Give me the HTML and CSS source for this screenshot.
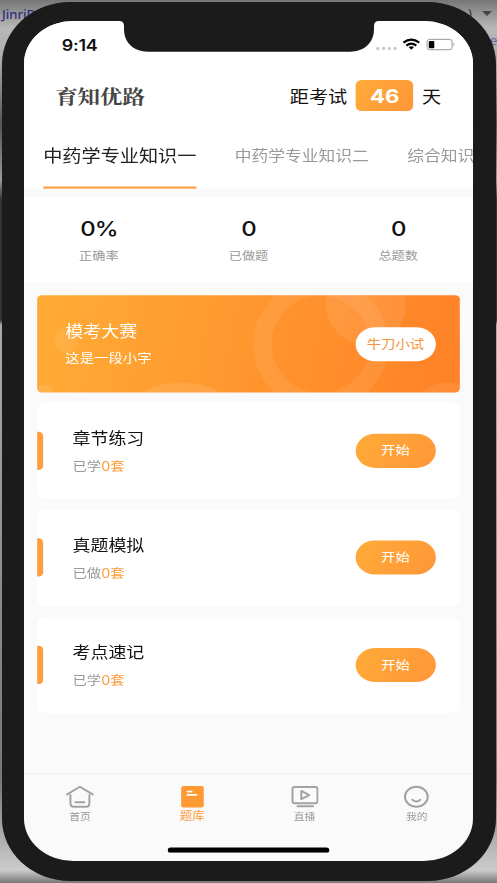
FILE: index.html
```
<!DOCTYPE html>
<html lang="zh-CN">
<head>
<meta charset="utf-8">
<title>题库</title>
<link rel="stylesheet" href="styles.css">
</head>
<body>
<div class="desktop">
  <div class="backdrop"><span class="word">JinriD</span><span class="paren">)</span><span class="caret"></span><span class="word-end">e</span></div>
  <div class="phone">
    <div class="screen-box">
      <div class="screen">
        <header class="status">
          <span class="time">9:14</span>
          <svg class="status-icons" viewBox="0 0 80 14" preserveAspectRatio="none">
            <g fill="#ccc"><circle cx="3" cy="11" r="1.700"/><circle cx="8.800" cy="11" r="1.700"/><circle cx="14.500" cy="11" r="1.700"/><circle cx="20.300" cy="11" r="1.700"/></g>
            <g fill="none" stroke="#000" stroke-width="2.200"><path d="M28.600 5Q36.500-1 44.400 5"/><path d="M31.500 8Q36.500 4.200 41.500 8"/></g>
            <path d="M33.800 9.500Q36.500 7.700 39.200 9.500L36.500 12.300Z"/>
            <rect x="52.300" y="1.800" width="25" height="10.400" rx="2.500" fill="none" stroke="#999"/>
            <rect x="54" y="3.400" width="5.500" height="7.400" rx="1"/>
            <path d="M78.600 5Q80.500 7 78.600 9Z" fill="#999"/>
          </svg>
        </header>
        <div class="brand-row">
          <h1>育知优路</h1>
          <div class="countdown"><span>距考试</span><b>46</b><span>天</span></div>
        </div>
        <nav class="subjects"><span class="active">中药学专业知识一</span><span>中药学专业知识二</span><span>综合知识</span></nav>
        <section class="stats">
          <div><strong>0%</strong><small>正确率</small></div>
          <div><strong>0</strong><small>已做题</small></div>
          <div><strong>0</strong><small>总题数</small></div>
        </section>
        <main>
          <section class="card banner">
            <svg class="bubbles" viewBox="0 0 422 96" preserveAspectRatio="none">
              <g fill="#fff">
                <ellipse cx="283" cy="49" rx="58" ry="57" fill="none" stroke="#fff" stroke-width="18" opacity=".08"/>
                <circle cx="328" cy="9" r="40" opacity=".09"/>
                <circle cx="29" cy="45" r="12" opacity=".08"/>
                <circle cx="7" cy="98" r="9" opacity=".1"/>
                <ellipse cx="144" cy="114" rx="50" ry="27" opacity=".1"/>
                <ellipse cx="412" cy="102" rx="28" ry="15" opacity=".08"/>
              </g>
            </svg>
            <div class="copy"><h2>模考大赛</h2><p>这是一段小字</p></div>
            <span class="button light">牛刀小试</span>
          </section>
          <section class="card"><i class="mark"></i><div class="copy"><h2>章节练习</h2><p>已学<em>0套</em></p></div><span class="button">开始</span></section>
          <section class="card"><i class="mark"></i><div class="copy"><h2>真题模拟</h2><p>已做<em>0套</em></p></div><span class="button">开始</span></section>
          <section class="card"><i class="mark"></i><div class="copy"><h2>考点速记</h2><p>已学<em>0套</em></p></div><span class="button">开始</span></section>
        </main>
        <footer class="tabs">
          <div>
            <svg viewBox="0 0 28 24" preserveAspectRatio="none"><path d="M1.200 10L14 2.300L26.800 10M4.500 10.500V19q0 3.200 3.200 3.200h12.600q3.200 0 3.200-3.200V10.500M9.500 17.700h9"/></svg>
            <span>首页</span>
          </div>
          <div class="current">
            <svg viewBox="0 0 28 24" preserveAspectRatio="none"><rect class="solid" x="2.700" y="1.500" width="22.600" height="21.500" rx="2.200"/><path class="lines" d="M8.900 7.100h4.300M8.900 10.400h9"/></svg>
            <span>题库</span>
          </div>
          <div>
            <svg viewBox="0 0 28 24" preserveAspectRatio="none"><rect x="1.500" y="2.500" width="25" height="16.200" rx="2"/><path d="M10.300 6.500V14.700L18.300 10.600ZM6.500 21.800h15.500"/></svg>
            <span>直播</span>
          </div>
          <div>
            <svg viewBox="0 0 28 24" preserveAspectRatio="none"><ellipse cx="14" cy="12.300" rx="11.400" ry="10"/><path d="M10 15.300q4 3.600 8 0"/></svg>
            <span>我的</span>
          </div>
        </footer>
        <div class="home-bar"></div>
      </div>
      <svg class="notch" viewBox="0 0 256 32"><path d="M-1 0H257Q253 .5 253 5V8C253 22 243 30.700 229 30.700H27C13 30.700 3 22 3 8V5Q3 .5-1 0Z"/></svg>
    </div>
  </div>
</div>
</body>
</html>
```
FILE: styles.css
```
* { box-sizing: border-box; }
body { margin: 0; font-family: Inter, "Noto Sans CJK SC", sans-serif; color: #111; }
h1, h2, p { margin: 0; font-weight: 400; }
em, i { font-style: normal; }

.desktop {
  position: relative;
  width: 497px;
  height: 883px;
  padding: 2px 1px 2px 2px;
  overflow: hidden;
  background: linear-gradient(#777 0, #b8b8b8 28px, #aaa 60px, #555 125px, #999 180px, #333 200px, #333 320px, #aaa 325px, #777 780px, #ccc 870px, #777 883px);
}
.backdrop { position: absolute; inset: 0; font: 13px/26px "Noto Sans", sans-serif; color: #303080; }
.backdrop span { position: absolute; }
.backdrop .word { left: 2px; top: 1px; font-weight: 500; }
.backdrop .paren { left: 468px; top: 0; color: #333; }
.backdrop .word-end { left: 490px; top: 27px; opacity: .6; }
.backdrop .caret { left: 482px; top: 11px; border: 5px solid transparent; border-top-color: #444; }

.phone {
  position: relative;
  height: 879px;
  padding: 19px 22px 20px;
  background: #1b1b1b;
  border-radius: 68px / 62px;
}
.screen-box { position: relative; width: 449px; height: 840px; }

/* 375 x 812 layout stretched to the device window */
.screen {
  display: flex;
  flex-direction: column;
  width: 375px;
  height: 812px;
  overflow: hidden;
  background: #fafafa;
  border-radius: 41px;
  transform: scale(1.1973, 1.0345);
  transform-origin: 0 0;
}
.notch { position: absolute; left: 97px; top: 0; width: 256px; height: 32px; overflow: visible; fill: #1b1b1b; }

.status { display: flex; justify-content: space-between; height: 44px; padding: 16px 15px 0 31.500px; background: #fff; }
.time { font-size: 15px; line-height: 15px; font-weight: 600; letter-spacing: -.2px; }
.status-icons { width: 66.800px; height: 13.500px; }

.brand-row { display: flex; align-items: center; justify-content: space-between; height: 57px; padding: 0 26.500px 1px 26px; background: #fff; }
.brand-row h1 { font: 700 18.800px/30px "Noto Serif CJK SC", "Noto Sans CJK SC", serif; color: #444; }
.countdown { display: flex; align-items: center; gap: 7px; font-size: 16px; }
.countdown b {
  width: 48.500px;
  height: 30px;
  border-radius: 5px;
  background: linear-gradient(120deg, #ffab38, #ff9638);
  color: #fff;
  font-size: 18.500px;
  line-height: 30px;
  text-align: center;
}

.subjects { display: flex; gap: 32px; height: 60.700px; padding-left: 16px; overflow: hidden; background: #fff; white-space: nowrap; color: #999; font-size: 14px; line-height: 57px; }
.subjects span { flex: none; }
.subjects .active { color: #222; font-size: 16px; border-bottom: 2.500px solid #ff9c3c; line-height: 58px; }

.stats { display: grid; grid-template-columns: repeat(3, 1fr); height: 83.500px; margin-top: 8px; padding-top: 19.500px; background: #fff; text-align: center; }
.stats strong, .stats small { display: block; }
.stats strong { font-size: 20px; line-height: 24px; font-weight: 500; letter-spacing: -.8px; }
.stats small { margin-top: 5.500px; color: #999; font-size: 11px; line-height: 16px; }

main { display: flex; flex-direction: column; gap: 10px; padding: 12.200px 11px 0; }
.card { position: relative; display: flex; align-items: center; height: 93.400px; padding-right: 20px; overflow: hidden; border-radius: 7px; background: #fff; }
.mark { width: 4.500px; height: 37px; border-radius: 0 4px 4px 0; background: #ff9c3c; }
.copy { flex: 1; padding-left: 25px; }
.copy h2 { font-size: 15px; line-height: 22px; }
.copy p { margin-top: 7px; color: #999; font-size: 12px; line-height: 18px; }
.card:not(.banner) .copy { padding-top: 2px; }
.copy em { color: #ff9c3c; }
.button { position: relative; width: 67.500px; height: 33px; border-radius: 17px; background: linear-gradient(120deg, #ffab38, #ff9638); color: #fff; font-size: 12px; line-height: 33px; text-align: center; }
.banner { border-radius: 4px; background: linear-gradient(100deg, #ffac36, #ff962e 50%, #ff8126); }
.banner .copy { position: relative; padding-left: 23.500px; }
.banner h2, .banner p { color: #fff; }
.banner .light { background: #fff; color: #f59540; }
.bubbles { position: absolute; inset: 0; width: 100%; height: 100%; }

.tabs { display: grid; grid-template-columns: repeat(4, 1fr); height: 60px; margin-top: auto; border-top: 1px solid #f1f1f1; }
.tabs div { display: flex; flex-direction: column; align-items: center; padding-top: 10px; color: #999; font-size: 9px; line-height: 16px; }
.tabs svg { width: 23.400px; height: 23.200px; fill: none; stroke: #a3a3a3; stroke-width: 2; stroke-linecap: round; stroke-linejoin: round; }
.tabs .current { color: #ff9c3c; font-size: 10.500px; }
.tabs .solid { fill: #ff9933; stroke: none; }
.tabs .lines { stroke: #fff; stroke-width: 1.700; }
.home-bar { flex: none; width: 134.500px; height: 5px; margin: 12px auto 8px; border-radius: 3px; background: #000; }
```
